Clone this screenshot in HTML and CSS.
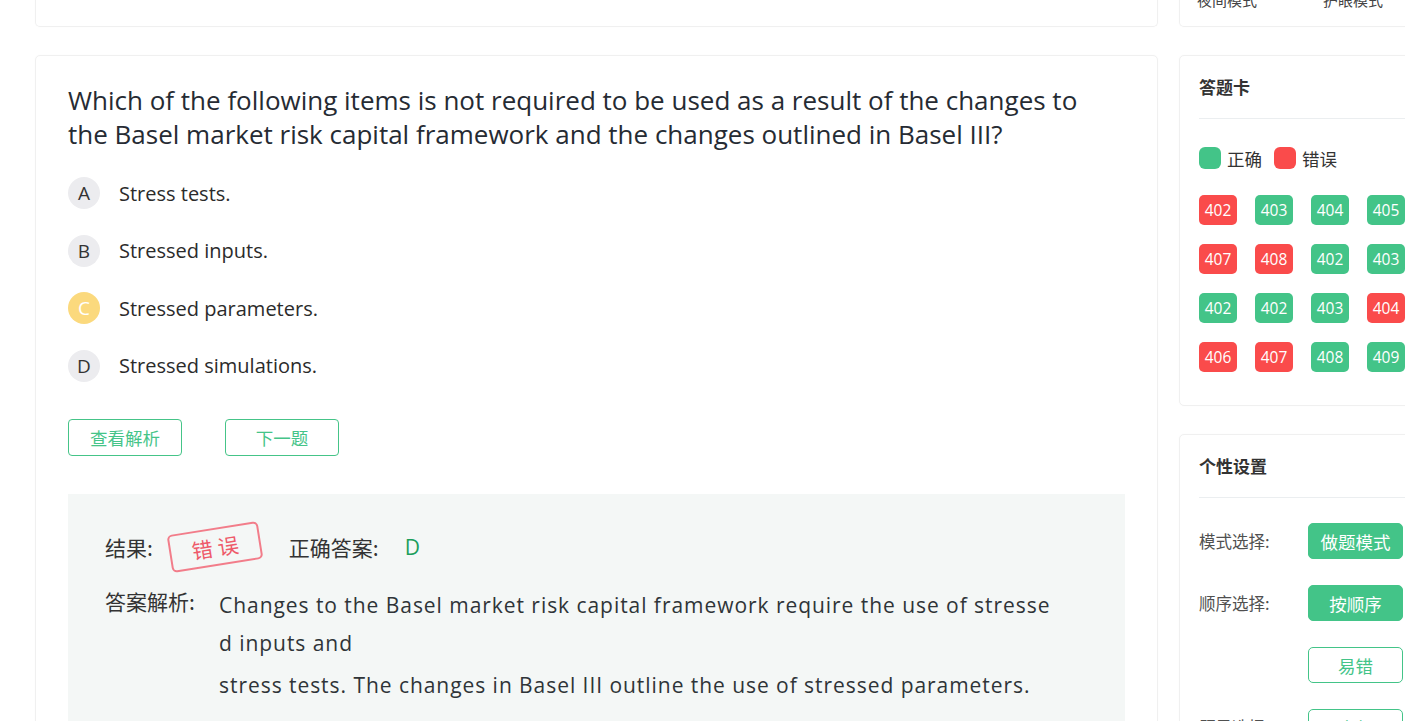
FILE: index.html
```html
<!DOCTYPE html>
<html lang="zh-CN">
<head>
<meta charset="utf-8">
<title>答题</title>
<link rel="stylesheet" href="styles.css">
</head>
<body>
<div class="page">
  <main class="main-col">
    <div class="card top-stub"></div>
    <section class="card question-card">
      <h1 class="question">Which of the following items is not required to be used as a result of the changes to the Basel market risk capital framework and the changes outlined in Basel III?</h1>
      <ul class="options">
        <li class="option"><span class="opt-key">A</span><span class="opt-text">Stress tests.</span></li>
        <li class="option"><span class="opt-key">B</span><span class="opt-text">Stressed inputs.</span></li>
        <li class="option"><span class="opt-key selected">C</span><span class="opt-text">Stressed parameters.</span></li>
        <li class="option"><span class="opt-key">D</span><span class="opt-text">Stressed simulations.</span></li>
      </ul>
      <div class="actions">
        <button class="btn-outline">查看解析</button>
        <button class="btn-outline">下一题</button>
      </div>
      <div class="analysis">
        <div class="result-row">
          <span class="label">结果:</span>
          <span class="stamp">错误</span>
          <span class="label correct-label">正确答案:</span>
          <span class="correct-answer">D</span>
        </div>
        <div class="explain-row">
          <span class="label explain-label">答案解析:</span>
          <div class="explain-text">
            <p class="explain-line">Changes to the Basel market risk capital framework require the use of stressed inputs and</p>
            <p class="explain-line next">stress tests. The changes in Basel III outline the use of stressed parameters.</p>
          </div>
        </div>
      </div>
    </section>
  </main>
  <aside class="side-col">
    <div class="card top-stub mode-stub">
      <div class="mode-row"><span>夜间模式</span><span>护眼模式</span></div>
    </div>
    <section class="card side-card sheet-card">
      <h2 class="side-title">答题卡</h2>
      <div class="legend">
        <span class="dot ok"></span><span class="legend-text">正确</span>
        <span class="dot bad"></span><span class="legend-text">错误</span>
      </div>
      <div class="num-grid">
        <span class="num bad">402</span><span class="num ok">403</span><span class="num ok">404</span><span class="num ok">405</span><span class="num ok">406</span>
        <span class="num bad">407</span><span class="num bad">408</span><span class="num ok">402</span><span class="num ok">403</span><span class="num ok">404</span>
        <span class="num ok">402</span><span class="num ok">402</span><span class="num ok">403</span><span class="num bad">404</span><span class="num ok">405</span>
        <span class="num bad">406</span><span class="num bad">407</span><span class="num ok">408</span><span class="num ok">409</span><span class="num ok">410</span>
      </div>
    </section>
    <section class="card side-card settings-card">
      <h2 class="side-title">个性设置</h2>
      <div class="setting-row first"><span class="setting-label">模式选择:</span><button class="btn-fill">做题模式</button></div>
      <div class="setting-row"><span class="setting-label">顺序选择:</span><button class="btn-fill">按顺序</button></div>
      <div class="setting-row"><span class="setting-label"></span><button class="btn-line">易错</button></div>
      <div class="setting-row"><span class="setting-label">题目选择:</span><button class="btn-line">全部</button></div>
    </section>
  </aside>
</div>
</body>
</html>
```
FILE: styles.css
```css
* { box-sizing: border-box; }
html, body { margin: 0; padding: 0; }
body {
  background: #fff;
  font-family: "Open Sans", "Noto Sans CJK SC", sans-serif;
  color: #333;
  overflow: hidden;
  height: 721px;
}
.page {
  display: flex;
  gap: 21px;
  padding-left: 35px;
  width: 1500px;
}
.main-col {
  width: 1123px;
  display: flex;
  flex-direction: column;
  gap: 28px;
  flex: none;
}
.side-col {
  width: 262px;
  display: flex;
  flex-direction: column;
  gap: 28px;
  flex: none;
}
.card {
  background: #fff;
  border: 1px solid #f0f0f0;
  border-radius: 5px;
  box-shadow: 0 0 3px rgba(0,0,0,0.02);
}
.top-stub {
  height: 27px;
  border-top: none;
  border-radius: 0 0 5px 5px;
  overflow: hidden;
}
.mode-stub {
  display: flex;
  align-items: flex-end;
  padding: 0 18px 16px 17px;
}
.mode-row {
  display: flex;
  gap: 66px;
  font-family: "Noto Sans CJK SC", sans-serif;
  font-size: 15px;
  line-height: 20px;
  color: #444;
}
.question-card {
  padding: 27px 32px 0;
  min-height: 700px;
}
.question {
  margin: 0;
  font-weight: 400;
  font-size: 26px;
  line-height: 34px;
  color: #262b33;
  width: 1020px;
}
.options {
  list-style: none;
  margin: 26px 0 0;
  padding: 0;
  display: flex;
  flex-direction: column;
  gap: 25.5px;
}
.option {
  display: flex;
  align-items: center;
  height: 32px;
}
.opt-key {
  width: 32px;
  height: 32px;
  border-radius: 50%;
  background: #ececef;
  color: #333;
  display: flex;
  align-items: center;
  justify-content: center;
  font-size: 19px;
  margin-right: 19px;
}
.opt-key.selected {
  background: #fbd97d;
  color: #fff;
}
.opt-text {
  font-size: 20px;
  color: #2b2b2b;
}
.actions {
  display: flex;
  gap: 43px;
  margin-top: 37px;
}
.btn-outline {
  width: 114px;
  height: 37px;
  background: #fff;
  border: 1px solid #45c488;
  border-radius: 4px;
  color: #45c488;
  font-family: "Noto Sans CJK SC", sans-serif;
  font-size: 17.5px;
  padding: 0;
}
.analysis {
  margin-top: 38px;
  background: #f4f7f6;
  padding: 33px 37px 40px 37px;
  min-height: 260px;
}
.result-row {
  display: flex;
  align-items: center;
  height: 40px;
}
.label {
  font-family: "Noto Sans CJK SC", sans-serif;
  font-size: 21px;
  color: #333;
}
.stamp {
  margin-left: 16px;
  width: 92px;
  height: 38px;
  border: 2px solid #f27d8a;
  border-radius: 5px;
  color: #ee5a6a;
  font-family: "Noto Sans CJK SC", sans-serif;
  font-size: 21px;
  letter-spacing: 5px;
  display: flex;
  align-items: center;
  justify-content: center;
  padding-left: 5px;
  transform: rotate(-9deg);
}
.correct-label { margin-left: 28px; }
.correct-answer {
  margin-left: 26px;
  font-size: 21px;
  color: #1c9e5c;
}
.explain-row {
  display: flex;
  margin-top: 17px;
}
.explain-label {
  width: 114px;
  flex: none;
  line-height: 34px;
}
.explain-text {
  width: 836px;
  padding-top: 2px;
}
.explain-line {
  margin: 0;
  font-size: 21px;
  line-height: 38px;
  letter-spacing: 0.95px;
  color: #2f3438;
  word-break: break-all;
}
.explain-line.next { margin-top: 4px; }
.side-card {
  padding: 18px 0 0 19px;
}
.sheet-card { height: 351px; }
.side-title {
  margin: 0;
  font-family: "Noto Sans CJK SC", sans-serif;
  font-size: 17px;
  font-weight: 700;
  line-height: 26px;
  color: #333;
  padding-bottom: 18px;
  border-bottom: 1px solid #ebeef0;
}
.legend {
  display: flex;
  align-items: center;
  margin-top: 28px;
  height: 22px;
}
.dot {
  width: 22px;
  height: 22px;
  border-radius: 6px;
}
.dot.ok { background: #43c488; }
.dot.bad { background: #fa4b4b; }
.legend-text {
  font-family: "Noto Sans CJK SC", sans-serif;
  font-size: 17.5px;
  color: #333;
  margin: 0 12px 0 6px;
}
.num-grid {
  margin-top: 26px;
  display: grid;
  grid-template-columns: repeat(5, 38px);
  column-gap: 18px;
  row-gap: 19px;
}
.num {
  height: 30px;
  border-radius: 5px;
  color: #fff;
  font-size: 15.5px;
  display: flex;
  align-items: center;
  justify-content: center;
}
.num.ok { background: #43c488; }
.num.bad { background: #fa4b4b; }
.settings-card { height: 320px; }
.setting-row {
  display: flex;
  align-items: center;
  margin-top: 26px;
}
.setting-row.first { margin-top: 25px; }
.setting-label {
  width: 109px;
  font-family: "Noto Sans CJK SC", sans-serif;
  font-size: 16.5px;
  color: #505050;
}
.btn-fill, .btn-line {
  width: 95px;
  height: 36px;
  border-radius: 5px;
  font-family: "Noto Sans CJK SC", sans-serif;
  font-size: 17.5px;
  padding: 0;
}
.btn-fill {
  background: #43c488;
  border: 1px solid #43c488;
  color: #fff;
}
.btn-line {
  background: #fff;
  border: 1px solid #43c488;
  color: #43c488;
}
```
